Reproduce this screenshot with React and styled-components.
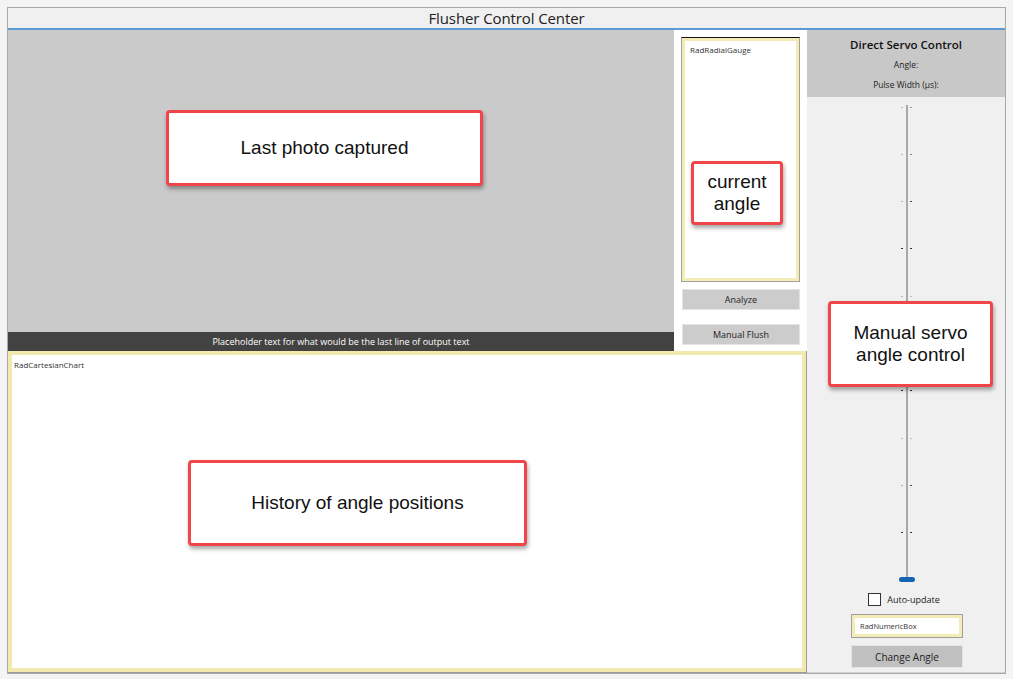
import React from "react";
import styled, { createGlobalStyle } from "styled-components";

const Global = createGlobalStyle`
  html, body { margin: 0; padding: 0; background: #f4f4f4; }
  body { font-family: "Open Sans", "Noto Sans", sans-serif; }
  #root { width: 1013px; height: 679px; }
`;

const Page = styled.div`
  width: 1013px;
  height: 679px;
  padding: 7px 7px 5px 7px;
  box-sizing: border-box;
  background: #f4f4f4;
`;

const Window = styled.div`
  width: 999px;
  height: 667px;
  border: 1px solid #a9a9a9;
  box-sizing: border-box;
  display: flex;
  flex-direction: column;
  background: #f0f0f0;
`;

const TitleBar = styled.div`
  height: 20px;
  border-bottom: 2px solid #5b9bd5;
  display: flex;
  align-items: center;
  justify-content: center;
  font-size: 15px;
  color: #222;
  background: #f0f0f0;
  letter-spacing: -0.1px;
`;

const Body = styled.div`
  flex: 1;
  display: flex;
  min-height: 0;
`;

const LeftArea = styled.div`
  width: 799px;
  display: flex;
  flex-direction: column;
`;

const TopRow = styled.div`
  height: 321px;
  display: flex;
`;

const PhotoColumn = styled.div`
  width: 666px;
  display: flex;
  flex-direction: column;
`;

const Photo = styled.div`
  position: relative;
  flex: 1;
  background: #cacaca;
`;

const StatusBar = styled.div`
  height: 19px;
  background: #424242;
  color: #fff;
  font-size: 9px;
  display: flex;
  align-items: center;
  justify-content: center;
`;

const GaugeColumn = styled.div`
  position: relative;
  width: 133px;
  background: #ffffff;
  box-sizing: border-box;
  padding: 7px 7px 0 7px;
  display: flex;
  flex-direction: column;
`;

const YellowBox = styled.div`
  box-sizing: border-box;
  background: #fff;
  border: 1px solid #a0a0a0;
  border-top-color: ${(p) => (p.$darkTop ? "#111" : "#a0a0a0")};
  box-shadow: inset 0 0 0 3px #f3ecb4;
  font-size: ${(p) => p.$fs || 8}px;
  color: #333;
  padding: ${(p) => p.$pad || "6px 8px"};
`;

const Gauge = styled(YellowBox)`
  height: 245px;
  width: 119px;
`;

const GrayButton = styled.div`
  box-sizing: border-box;
  height: ${(p) => p.$h || 21}px;
  width: ${(p) => p.$w || 118}px;
  margin-top: ${(p) => p.$mt || 0}px;
  margin-left: ${(p) => p.$ml || 0}px;
  background: ${(p) => p.$bg || "#cccccc"};
  border: 1px solid #e4e4e4;
  display: flex;
  align-items: center;
  justify-content: center;
  font-size: ${(p) => p.$fs || 9}px;
  color: #222;
`;

const Chart = styled(YellowBox)`
  position: relative;
  flex: 1;
  border-top: none;
  border-left: none;
  border-color: #9a9a9a;
  box-shadow: inset 0 0 0 4px #f1e9ad;
  padding: 8px 6px;
  font-size: 8px;
`;

const RightPanel = styled.div`
  position: relative;
  flex: 1;
  display: flex;
  flex-direction: column;
  background: #f0f0f0;
  border-bottom: 1px solid #d0d0d0;
`;

const ServoHeader = styled.div`
  height: 67px;
  background: #c8c8c8;
  display: flex;
  flex-direction: column;
  align-items: center;
  padding-top: 7px;
  box-sizing: border-box;
`;

const HeaderTitle = styled.div`
  font-size: 11.5px;
  font-weight: 600;
  color: #111;
  line-height: 16px;
`;

const HeaderLine = styled.div`
  font-size: 8.5px;
  color: #222;
  line-height: 12px;
  margin-top: ${(p) => p.$mt}px;
`;

const SliderArea = styled.div`
  position: relative;
  height: 486px;
  display: flex;
  justify-content: center;
`;

const Track = styled.div`
  position: absolute;
  left: 99px;
  top: 8px;
  width: 2px;
  height: 476px;
  background: #a9a9a9;
`;

const Tick = styled.div`
  position: absolute;
  top: ${(p) => p.$y}px;
  left: ${(p) => p.$x}px;
  width: 2px;
  height: 1px;
  background: ${(p) => p.$c};
`;

const Thumb = styled.div`
  position: absolute;
  left: 92px;
  top: 480px;
  width: 16px;
  height: 5px;
  border-radius: 3px;
  background: #1464b4;
`;

const CheckRow = styled.div`
  display: flex;
  align-items: center;
  justify-content: center;
  gap: 6px;
  font-size: 9px;
  color: #222;
  margin-top: 10px;
`;

const CheckBox = styled.div`
  width: 11px;
  height: 11px;
  border: 1px solid #333;
  background: #fff;
  margin-left: -4px;
`;

const NumericBox = styled(YellowBox)`
  width: 112px;
  height: 24px;
  margin-left: 44px;
  margin-top: 8px;
  display: flex;
  align-items: center;
  padding: 0 8px;
  font-size: 7.5px;
`;

const Callout = styled.div`
  position: absolute;
  left: ${(p) => p.$x}px;
  top: ${(p) => p.$y}px;
  width: ${(p) => p.$w}px;
  height: ${(p) => p.$h}px;
  box-sizing: border-box;
  background: #fff;
  border: 3px solid #f0464a;
  border-radius: 4px;
  box-shadow: 1px 3px 4px rgba(0, 0, 0, 0.35);
  display: flex;
  align-items: center;
  justify-content: center;
  text-align: center;
  font-family: "Liberation Sans", Arial, sans-serif;
  font-size: 19px;
  line-height: 22px;
  color: #111;
  z-index: 2;
`;

const ticks = [
  [0, "#bbb", "#999"],
  [47, "#bbb", "#888"],
  [94, "#aaa", "#444"],
  [141, "#333", "#333"],
  [189, "#bbb", "#bbb"],
  [236, "#bbb", "#999"],
  [283, "#333", "#333"],
  [331, "#bbb", "#bbb"],
  [378, "#aaa", "#444"],
  [425, "#333", "#333"],
];

export default function App() {
  return (
    <>
      <Global />
      <Page>
        <Window>
          <TitleBar>Flusher Control Center</TitleBar>
          <Body>
            <LeftArea>
              <TopRow>
                <PhotoColumn>
                  <Photo>
                    <Callout $x={158} $y={80} $w={317} $h={76}>
                      Last photo captured
                    </Callout>
                  </Photo>
                  <StatusBar>
                    Placeholder text for what would be the last line of output text
                  </StatusBar>
                </PhotoColumn>
                <GaugeColumn>
                  <Gauge $darkTop>RadRadialGauge</Gauge>
                  <GrayButton $mt={7} $ml={1}>Analyze</GrayButton>
                  <GrayButton $mt={14} $ml={1}>Manual Flush</GrayButton>
                  <Callout $x={17} $y={131} $w={92} $h={64}>
                    current
                    <br />
                    angle
                  </Callout>
                </GaugeColumn>
              </TopRow>
              <Chart>
                RadCartesianChart
                <Callout $x={180} $y={109} $w={339} $h={86}>
                  History of angle positions
                </Callout>
              </Chart>
            </LeftArea>
            <RightPanel>
              <ServoHeader>
                <HeaderTitle>Direct Servo Control</HeaderTitle>
                <HeaderLine $mt={6}>Angle:</HeaderLine>
                <HeaderLine $mt={8}>Pulse Width (µs):</HeaderLine>
              </ServoHeader>
              <SliderArea>
                <Track />
                {ticks.map(([y, l, r], i) => (
                  <React.Fragment key={i}>
                    <Tick $y={10 + y} $x={94} $c={l} />
                    <Tick $y={10 + y} $x={103} $c={r} />
                  </React.Fragment>
                ))}
                <Thumb />
              </SliderArea>
              <CheckRow>
                <CheckBox />
                Auto-update
              </CheckRow>
              <NumericBox>RadNumericBox</NumericBox>
              <GrayButton $w={112} $h={23} $mt={7} $ml={44} $bg="#c0c0c0" $fs={10}>
                Change Angle
              </GrayButton>
              <Callout $x={21} $y={271} $w={165} $h={86}>
                Manual servo
                <br />
                angle control
              </Callout>
            </RightPanel>
          </Body>
        </Window>
      </Page>
    </>
  );
}
